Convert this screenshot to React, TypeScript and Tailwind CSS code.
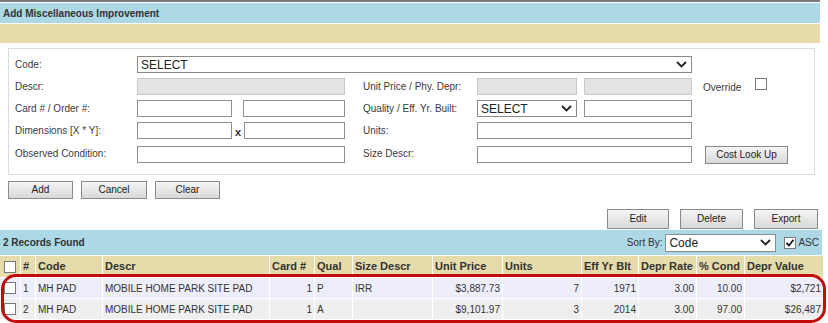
import React from "react";

const F = { fontFamily: '"Liberation Sans", Arial, sans-serif' };

function Chevron({ className = "" }: { className?: string }) {
  return (
    <svg width="11" height="7" viewBox="0 0 11 7" className={className}>
      <path d="M1 1 L5.5 5.5 L10 1" fill="none" stroke="#222" strokeWidth="1.8" />
    </svg>
  );
}

function Select({ w, text }: { w: string; text: string }) {
  return (
    <div className={`${w} h-[17px] border border-[#8a8a8a] bg-white flex items-center justify-between pl-[3px] pr-[4px] text-[12px] text-[#222] leading-none`}>
      <span>{text}</span>
      <Chevron />
    </div>
  );
}

function Input({ w, disabled = false }: { w: string; disabled?: boolean }) {
  return (
    <div
      className={`${w} h-[17px] border ${disabled ? "border-[#c8c8c8] bg-[#e4e4e4]" : "border-[#8f8f8f] bg-white"}`}
    />
  );
}

function Btn({ w, h = "h-[18px]", children }: { w: string; h?: string; children: React.ReactNode }) {
  return (
    <div
      className={`${w} ${h} border border-[#8a8a8a] bg-gradient-to-b from-[#f5f5f5] to-[#d9d9d9] flex items-center justify-center text-[10px] text-[#222] leading-none`}
    >
      {children}
    </div>
  );
}

function Box({ checked = false }: { checked?: boolean }) {
  return (
    <div className="w-[12px] h-[12px] border border-[#7a7a7a] bg-white flex items-center justify-center">
      {checked && (
        <svg width="10" height="10" viewBox="0 0 10 10">
          <path d="M1.5 5 L4 7.5 L8.5 1.8" fill="none" stroke="#111" strokeWidth="1.8" />
        </svg>
      )}
    </div>
  );
}

function Label({ w, children }: { w: string; children: React.ReactNode }) {
  return <div className={`${w} text-[10px] text-[#3a3a3a] leading-none whitespace-nowrap`}>{children}</div>;
}

const cols = [
  { w: "w-[20px]", a: "c" },
  { w: "w-[14px]", a: "l" },
  { w: "w-[66px]", a: "l" },
  { w: "w-[166px]", a: "l" },
  { w: "w-[44px]", a: "r" },
  { w: "w-[37px]", a: "l" },
  { w: "w-[79px]", a: "l" },
  { w: "w-[69px]", a: "r" },
  { w: "w-[78px]", a: "r" },
  { w: "w-[56px]", a: "r" },
  { w: "w-[57px]", a: "r" },
  { w: "w-[47px]", a: "r" },
  { w: "w-[78px]", a: "r" },
];

const headers = ["", "#", "Code", "Descr", "Card #", "Qual", "Size Descr", "Unit Price", "Units", "Eff Yr Blt", "Depr Rate", "% Cond", "Depr Value"];

const rows = [
  ["", "1", "MH PAD", "MOBILE HOME PARK SITE PAD", "1", "P", "IRR", "$3,887.73", "7", "1971", "3.00", "10.00", "$2,721"],
  ["", "2", "MH PAD", "MOBILE HOME PARK SITE PAD", "1", "A", "", "$9,101.97", "3", "2014", "3.00", "97.00", "$26,487"],
];

export default function App() {
  return (
    <div className="w-[828px] h-[323px] bg-white overflow-hidden relative" style={F}>
      <div className="w-[820px] h-[2px] bg-[#7a7a7a]" />
      <div className="w-[820px] h-[20px] mt-[1px] bg-[#add8e6] flex items-center pl-[3px] text-[10px] font-bold text-[#333]">
        Add Miscellaneous Improvement
      </div>
      <div className="w-[820px] h-[19px] mt-[1px] bg-[#e6dbab]" />

      <div className="ml-[8px] mt-[5px] w-[807px] border border-[#dcdcdc] pt-[7px] pb-[10px] flex flex-col gap-[5px]">
        <div className="flex items-center">
          <Label w="w-[128px] pl-[6px]">Code:</Label>
          <Select w="w-[555px]" text="SELECT" />
        </div>
        <div className="flex items-center">
          <Label w="w-[128px] pl-[6px]">Descr:</Label>
          <Input w="w-[208px]" disabled />
          <Label w="w-[114px] ml-[18px]">Unit Price / Phy. Depr:</Label>
          <Input w="w-[100px]" disabled />
          <div className="ml-[7px]">
            <Input w="w-[108px]" disabled />
          </div>
          <Label w="w-[52px] ml-[11px] pt-[2px]">Override</Label>
          <div className="-mt-[5px]">
            <Box />
          </div>
        </div>
        <div className="flex items-center">
          <Label w="w-[128px] pl-[6px]">Card # / Order #:</Label>
          <Input w="w-[95px]" />
          <div className="ml-[11px]">
            <Input w="w-[102px]" />
          </div>
          <Label w="w-[114px] ml-[18px]">Quality / Eff. Yr. Built:</Label>
          <Select w="w-[100px]" text="SELECT" />
          <div className="ml-[7px]">
            <Input w="w-[108px]" />
          </div>
        </div>
        <div className="flex items-center">
          <Label w="w-[128px] pl-[6px]">Dimensions [X * Y]:</Label>
          <Input w="w-[95px]" />
          <div className="w-[12px] text-center text-[11px] font-bold text-[#333] leading-none pt-[3px]">x</div>
          <Input w="w-[101px]" />
          <Label w="w-[114px] ml-[18px]">Units:</Label>
          <Input w="w-[215px]" />
        </div>
        <div className="flex items-center">
          <Label w="w-[128px] pl-[6px]">Observed Condition:</Label>
          <Input w="w-[208px]" />
          <Label w="w-[114px] ml-[18px]">Size Descr:</Label>
          <Input w="w-[215px]" />
          <div className="ml-[13px] mt-[2px]">
            <Btn w="w-[83px]">Cost Look Up</Btn>
          </div>
        </div>
      </div>

      <div className="flex ml-[8px] mt-[6px] gap-[8px]">
        <Btn w="w-[65px]">Add</Btn>
        <Btn w="w-[66px]">Cancel</Btn>
        <Btn w="w-[65px]">Clear</Btn>
      </div>

      <div className="flex justify-end pr-[10px] mt-[10px] gap-[11px]">
        <Btn w="w-[62px]" h="h-[20px]">Edit</Btn>
        <Btn w="w-[63px]" h="h-[20px]">Delete</Btn>
        <Btn w="w-[64px]" h="h-[20px]">Export</Btn>
      </div>

      <div className="w-[822px] h-[25px] mt-[1px] bg-[#add8e6] flex items-center pl-[3px] pr-[3px]">
        <div className="text-[10px] font-bold text-[#333]">2 Records Found</div>
        <div className="ml-auto flex items-center">
          <span className="text-[10px] text-[#333] mr-[3px]">Sort By:</span>
          <Select w="w-[111px] h-[18px]" text="Code" />
          <div className="ml-[8px]">
            <Box checked />
          </div>
          <span className="text-[10px] text-[#333] ml-[2px]">ASC</span>
        </div>
      </div>

      <div className="relative mt-[1px]">
        <div className="flex flex-col gap-[1px] w-[822px]">
          <div className="flex gap-[1px] h-[21px]">
            {headers.map((h, i) => (
              <div
                key={i}
                className={`${cols[i].w} shrink-0 bg-[#e6dbab] flex items-center ${i === 0 ? "justify-center" : "justify-start pl-[2px]"} text-[11px] font-bold text-[#333] whitespace-nowrap`}
              >
                {i === 0 ? <Box /> : h}
              </div>
            ))}
          </div>
          {rows.map((r, ri) => (
            <div key={ri} className="flex gap-[1px] h-[20px]">
              {r.map((c, i) => (
                <div
                  key={i}
                  className={`${cols[i].w} shrink-0 ${ri === 0 ? "bg-[#eeeefb]" : "bg-[#efefef]"} flex items-center ${
                    cols[i].a === "c" ? "justify-center" : cols[i].a === "r" ? "justify-end pr-[2px]" : "justify-start pl-[2px]"
                  } text-[10px] text-[#333] whitespace-nowrap`}
                >
                  {i === 0 ? <Box /> : c}
                </div>
              ))}
            </div>
          ))}
        </div>
        <div className="absolute left-[1px] top-[18px] w-[825px] h-[49px] border-[3px] border-[#c40a0a] rounded-[15px] pointer-events-none" />
      </div>
    </div>
  );
}
